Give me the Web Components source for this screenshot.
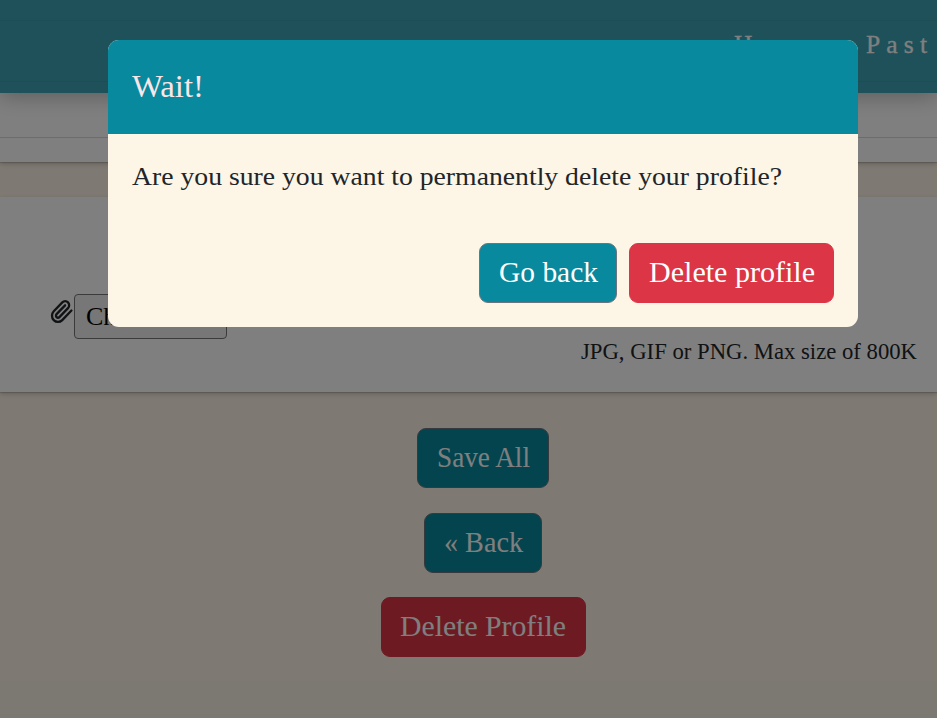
<!DOCTYPE html>
<html lang="en">
<head>
<meta charset="utf-8">
<title>Edit profile</title>
<style>
html,body{margin:0;height:100%;overflow:hidden}
body{font-family:"Liberation Serif",serif;color:#212529;background:#fdf5e6}
</style>
</head>
<body>
<profile-page></profile-page>
<confirm-dialog>
  <fit-text slot="title" width="72" size="31.5">Wait!</fit-text>
  <fit-text slot="body" width="650" size="26">Are you sure you want to permanently delete your profile?</fit-text>
  <action-button slot="actions" style="width:138px"><fit-text width="99" size="29">Go back</fit-text></action-button>
  <action-button slot="actions" kind="danger" style="width:205px"><fit-text width="166" size="29">Delete profile</fit-text></action-button>
</confirm-dialog>
<script>
const define = (name, html, ready) => customElements.define(name, class extends HTMLElement {
  constructor() {
    super();
    this.attachShadow({ mode: 'open' }).innerHTML = html;
  }
  connectedCallback() { if (ready) ready.call(this); }
});

// One line of text that fills the given width, by glyph width or (tracked) by letter spacing.
define('fit-text', `<style>
:host{display:inline-block;white-space:nowrap;line-height:1.5}
span{display:inline-block;transform-origin:0 50%}
</style><span><slot></slot></span>`, function () {
  const span = this.shadowRoot.querySelector('span');
  const target = +this.getAttribute('width');
  this.style.width = target + 'px';
  span.style.fontSize = this.getAttribute('size') + 'px';
  const natural = span.getBoundingClientRect().width;
  if (this.hasAttribute('tracked')) {
    span.style.letterSpacing = (target - natural) / (this.textContent.length - 1) + 'px';
  } else {
    span.style.marginRight = (target - natural) + 'px';
    span.style.transform = 'scaleX(' + target / natural + ')';
  }
});

define('action-button', `<style>
:host{display:block;height:60px}
button{display:flex;align-items:center;justify-content:center;box-sizing:border-box;width:100%;height:60px;padding:0;border:1px solid #6c757d;border-radius:9px;background:#08899d;color:#fff;font:inherit}
:host([kind=danger]) button{background:#dc3545;border-color:#dc3545}
</style><button><slot></slot></button>`);

define('site-header', `<style>
:host{display:flex;justify-content:flex-end;box-sizing:border-box;height:93px;padding:26px 10px 0 0;gap:36px;color:#fff;position:relative;z-index:1;
background:linear-gradient(#3b9cac,#3b9cac) 0 20px/100% 1px no-repeat,linear-gradient(#3b9cac,#3b9cac) 0 81px/100% 1px no-repeat,#3ea3b4;
box-shadow:0 4px 20px rgba(0,0,0,.26)}
fit-text{-webkit-text-stroke:.3px #fff}
</style><fit-text tracked width="96" size="25.5">Home</fit-text><fit-text tracked width="61" size="25.5">Past</fit-text>`);

define('page-card', `<style>
:host{display:block;box-sizing:border-box;background:#fff;box-shadow:0 2px 5px rgba(0,0,0,.2),0 1px 1px rgba(0,0,0,.14)}
</style><slot></slot>`);

define('photo-upload', `<style>
:host{display:flex;flex-direction:column;box-sizing:border-box;height:100%;padding:97px 20px 0 50px}
.row{display:flex;align-items:flex-start;height:45px}
svg{width:24px;height:25px;margin-top:5px}
button{box-sizing:border-box;width:153px;height:45px;padding:0 4px 0 0;border:1px solid #767676;border-radius:4px;background:#efefef;font:26px "Liberation Serif",serif;color:#000;white-space:nowrap}
fit-text{align-self:flex-end;margin-top:-4px}
</style>
<div class="row"><svg viewBox="0 0 24 24" preserveAspectRatio="none" fill="none" stroke="#212529" stroke-width="2.3" stroke-linecap="round" stroke-linejoin="round"><path d="m21.44 11.05-9.19 9.19a6 6 0 0 1-8.49-8.49l8.57-8.57A4 4 0 1 1 18 8.84l-8.59 8.57a2 2 0 0 1-2.83-2.83l8.49-8.48"/></svg><button>Choose File</button></div>
<fit-text width="336" size="22.5">JPG, GIF or PNG. Max size of 800K</fit-text>`);

define('profile-page', `<style>
:host{display:flex;flex-direction:column;height:718px;background:#fdf5e6}
.top{height:69px;padding-top:44px}
.top div{height:1px;background:#d9d9d9}
.photo{height:195px;margin-top:35px}
.actions{display:flex;flex-direction:column;align-items:center;gap:24.5px;padding:36px 0 0 29px}
footer{height:37px;margin-top:auto;background:#f9f0e4}
</style>
<site-header></site-header>
<page-card class="top"><div></div></page-card>
<page-card class="photo"><photo-upload></photo-upload></page-card>
<div class="actions">
<action-button style="width:132px"><fit-text width="93" size="29">Save All</fit-text></action-button>
<action-button style="width:118px"><fit-text width="79" size="29">« Back</fit-text></action-button>
<action-button kind="danger" style="width:205px"><fit-text width="166" size="29">Delete Profile</fit-text></action-button>
</div>
<footer></footer>`);

define('confirm-dialog', `<style>
:host{position:fixed;inset:0;z-index:2;display:flex;justify-content:center;align-items:flex-start;box-sizing:border-box;padding:40px 0 0 29px;background:rgba(0,0,0,.5)}
section{box-sizing:border-box;width:750px;height:287px;border-radius:11px;overflow:hidden;background:#fdf5e6;display:flex;flex-direction:column}
header{display:flex;align-items:center;box-sizing:border-box;height:94px;padding:0 24px;background:#08899d;color:#fae6e8}
main{padding:23px 24px 0}
footer{display:flex;justify-content:flex-end;gap:12px;margin-top:auto;padding:0 24px 24px}
</style><section><header><slot name="title"></slot></header><main><slot name="body"></slot></main><footer><slot name="actions"></slot></footer></section>`);
</script>
</body>
</html>
